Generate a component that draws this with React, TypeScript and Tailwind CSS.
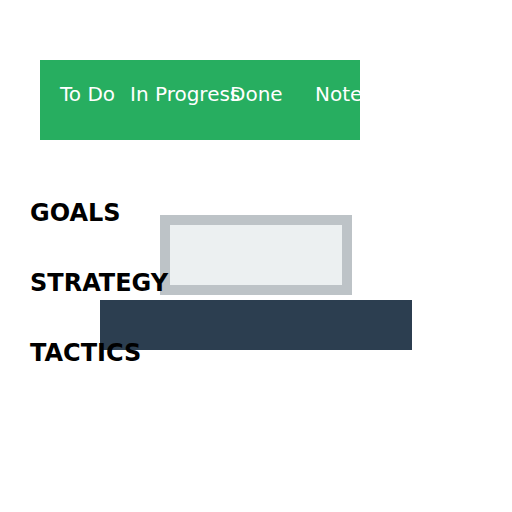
import React from "react";

const tabs = [
  { label: "To Do", width: "w-[70px]" },
  { label: "In Progress", width: "w-[100px]" },
  { label: "Done", width: "w-[85px]" },
  { label: "Notes", width: "w-[85px]" },
];

export default function App() {
  return (
    <div className="relative w-[512px] h-[512px] bg-white overflow-hidden font-['DejaVu_Sans',sans-serif]">
      {/* tab bar */}
      <div className="pt-[60px] pl-[40px]">
        <div className="w-[320px] h-[80px] bg-[#27ae60] pt-[24px] pl-[20px] flex overflow-hidden text-white text-[20px] leading-[20px]">
          {tabs.map((t) => (
            <div key={t.label} className={`${t.width} shrink-0 whitespace-nowrap`}>
              {t.label}
            </div>
          ))}
        </div>
      </div>

      {/* shapes on the canvas */}
      <div className="absolute left-[160px] top-[215px] w-[192px] h-[80px] border-[10px] border-[#bdc3c7] bg-[#ecf0f1]" />
      <div className="absolute left-[100px] top-[300px] w-[312px] h-[50px] bg-[#2c3e50]" />

      {/* labels */}
      <div className="relative z-10 mt-[61px] pl-[30px] flex flex-col gap-[46px] font-bold text-[24px] leading-[24px] text-black">
        <div>GOALS</div>
        <div>STRATEGY</div>
        <div>TACTICS</div>
      </div>
    </div>
  );
}
